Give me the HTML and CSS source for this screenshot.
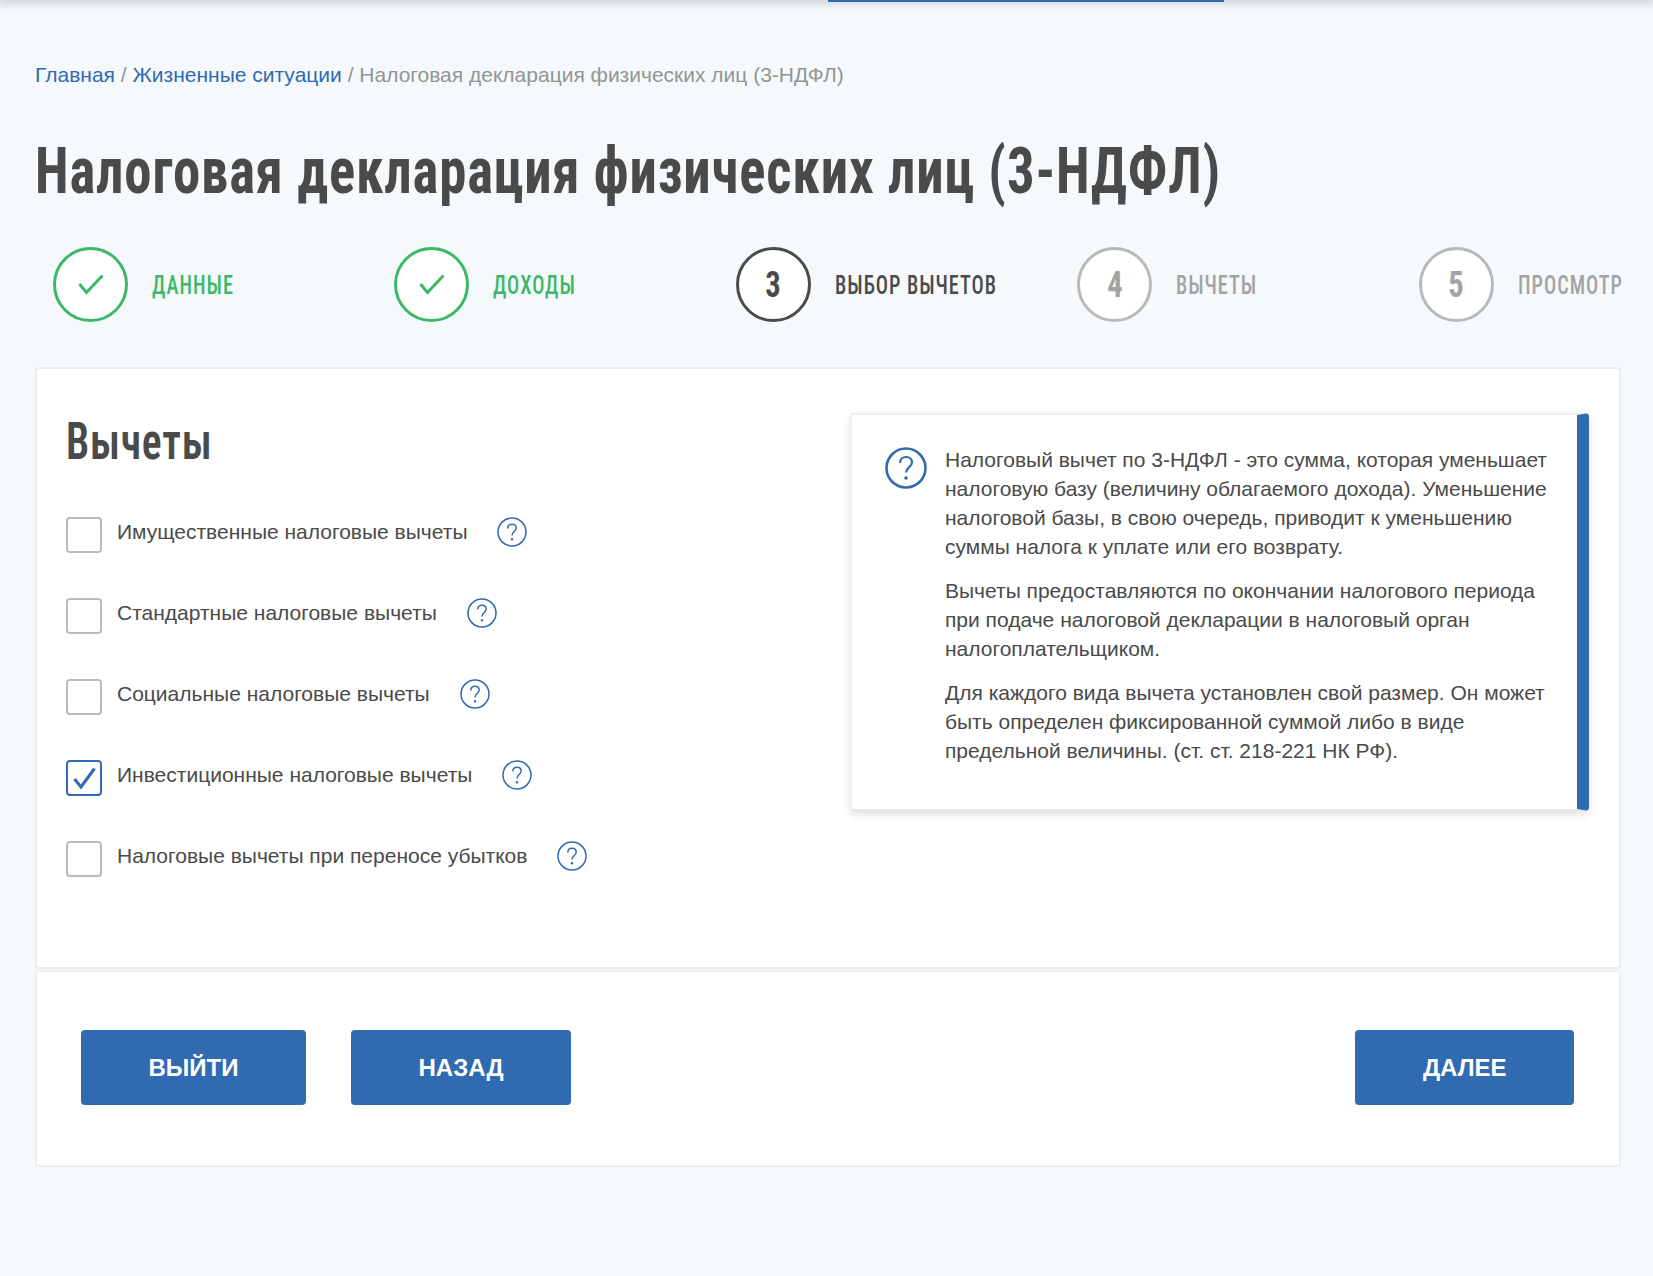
FILE: index.html
```html
<!DOCTYPE html>
<html lang="ru">
<head>
<meta charset="utf-8">
<title>Налоговая декларация физических лиц (3-НДФЛ)</title>
<link rel="stylesheet" href="styles.css">
</head>
<body>
<div class="topbar"><div class="topbar-active"></div></div>
<main class="page">
  <nav class="crumbs"><a href="#">Главная</a> / <a href="#">Жизненные ситуации</a> / Налоговая декларация физических лиц (3-НДФЛ)</nav>
  <h1 class="title">Налоговая декларация физических лиц (3-НДФЛ)</h1>
  <ol class="steps">
    <li class="step done"><span class="step-circle"><svg width="30" height="30" viewBox="0 0 30 30"><path d="M3.500 14 L10.500 22.500 L26.500 5.500" fill="none" stroke="currentColor" stroke-width="3"/></svg></span><span class="step-label">Данные</span></li>
    <li class="step done"><span class="step-circle"><svg width="30" height="30" viewBox="0 0 30 30"><path d="M3.500 14 L10.500 22.500 L26.500 5.500" fill="none" stroke="currentColor" stroke-width="3"/></svg></span><span class="step-label">Доходы</span></li>
    <li class="step current"><span class="step-circle"><span class="step-num">3</span></span><span class="step-label">Выбор вычетов</span></li>
    <li class="step"><span class="step-circle"><span class="step-num">4</span></span><span class="step-label">Вычеты</span></li>
    <li class="step"><span class="step-circle"><span class="step-num">5</span></span><span class="step-label">Просмотр</span></li>
  </ol>
  <section class="card card-main">
    <div class="col-left">
      <h2 class="subtitle">Вычеты</h2>
      <ul class="options">
        <li class="option"><span class="box"></span><span class="option-text">Имущественные налоговые вычеты</span><svg class="q" viewBox="0 0 30 30"><circle cx="15" cy="15" r="14" fill="none" stroke="#306ab1" stroke-width="1.5"/><path d="M10.8 11.4c0-2.6 1.9-4.2 4.3-4.2s4.1 1.6 4.1 3.8c0 3.4-4.2 3.6-4.2 7.4" fill="none" stroke="#306ab1" stroke-width="1.5"/><circle cx="15" cy="22.3" r="1.2" fill="#306ab1"/></svg></li>
        <li class="option"><span class="box"></span><span class="option-text">Стандартные налоговые вычеты</span><svg class="q" viewBox="0 0 30 30"><circle cx="15" cy="15" r="14" fill="none" stroke="#306ab1" stroke-width="1.5"/><path d="M10.8 11.4c0-2.6 1.9-4.2 4.3-4.2s4.1 1.6 4.1 3.8c0 3.4-4.2 3.6-4.2 7.4" fill="none" stroke="#306ab1" stroke-width="1.5"/><circle cx="15" cy="22.3" r="1.2" fill="#306ab1"/></svg></li>
        <li class="option"><span class="box"></span><span class="option-text">Социальные налоговые вычеты</span><svg class="q" viewBox="0 0 30 30"><circle cx="15" cy="15" r="14" fill="none" stroke="#306ab1" stroke-width="1.5"/><path d="M10.8 11.4c0-2.6 1.9-4.2 4.3-4.2s4.1 1.6 4.1 3.8c0 3.4-4.2 3.6-4.2 7.4" fill="none" stroke="#306ab1" stroke-width="1.5"/><circle cx="15" cy="22.3" r="1.2" fill="#306ab1"/></svg></li>
        <li class="option"><span class="box checked"><svg width="26" height="24" viewBox="0 0 26 24"><path d="M3.500 13 L10 21 L23.500 2.500" fill="none" stroke="#306ab1" stroke-width="3"/></svg></span><span class="option-text">Инвестиционные налоговые вычеты</span><svg class="q" viewBox="0 0 30 30"><circle cx="15" cy="15" r="14" fill="none" stroke="#306ab1" stroke-width="1.5"/><path d="M10.8 11.4c0-2.6 1.9-4.2 4.3-4.2s4.1 1.6 4.1 3.8c0 3.4-4.2 3.6-4.2 7.4" fill="none" stroke="#306ab1" stroke-width="1.5"/><circle cx="15" cy="22.3" r="1.2" fill="#306ab1"/></svg></li>
        <li class="option"><span class="box"></span><span class="option-text">Налоговые вычеты при переносе убытков</span><svg class="q" viewBox="0 0 30 30"><circle cx="15" cy="15" r="14" fill="none" stroke="#306ab1" stroke-width="1.5"/><path d="M10.8 11.4c0-2.6 1.9-4.2 4.3-4.2s4.1 1.6 4.1 3.8c0 3.4-4.2 3.6-4.2 7.4" fill="none" stroke="#306ab1" stroke-width="1.5"/><circle cx="15" cy="22.3" r="1.2" fill="#306ab1"/></svg></li>
      </ul>
    </div>
    <aside class="info">
      <svg class="info-icon" viewBox="0 0 42 42"><circle cx="21" cy="21" r="19.5" fill="none" stroke="#306ab1" stroke-width="2.6"/><path d="M15 16c0-3.6 2.700-6 6.200-6 3.400 0 5.800 2.200 5.800 5.300 0 4.700-5.900 5-5.900 10.300" fill="none" stroke="#306ab1" stroke-width="2.200"/><circle cx="21" cy="31" r="1.800" fill="#306ab1"/></svg>
      <div class="info-text">
        <p>Налоговый вычет по 3-НДФЛ - это сумма, которая уменьшает налоговую базу (величину облагаемого дохода). Уменьшение налоговой базы, в свою очередь, приводит к уменьшению суммы налога к уплате или его возврату.</p>
        <p>Вычеты предоставляются по окончании налогового периода при подаче налоговой декларации в налоговый орган налогоплательщиком.</p>
        <p>Для каждого вида вычета установлен свой размер. Он может быть определен фиксированной суммой либо в виде предельной величины. (ст. ст. 218-221 НК РФ).</p>
      </div>
    </aside>
  </section>
  <section class="card card-actions">
    <button class="btn">Выйти</button>
    <button class="btn">Назад</button>
    <button class="btn btn-next">Далее</button>
  </section>
</main>
</body>
</html>
```
FILE: styles.css
```css
* { box-sizing: border-box; }
html, body { margin: 0; padding: 0; }
body {
  background: #f5f9fc;
  color: #4a4a4a;
  font-family: "Liberation Sans", Arial, sans-serif;
  font-size: 21px;
  height: 1276px;
  overflow: hidden;
}
.topbar {
  height: 0;
  box-shadow: 0 0 9px 3px rgba(70, 80, 90, 0.3);
  display: flex;
  padding-left: 828px;
}
.topbar-active { width: 396px; height: 2px; background: #306ab1; flex: none; }
.page { padding: 0 32px 0 35px; }
.crumbs { padding-top: 60px; line-height: 30px; color: #949494; }
.crumbs a { color: #306ab1; text-decoration: none; }
.title, .subtitle, .step-label, .step-num {
  font-family: Roboto, "Liberation Sans", sans-serif;
  font-stretch: 75%;
}
.title {
  margin: 45px 0 0;
  font-size: 64px;
  line-height: 74px;
  font-weight: 700;
  letter-spacing: 1px;
  white-space: nowrap;
  transform: scaleX(0.855);
  transform-origin: left center;
}
.steps {
  list-style: none;
  margin: 38px 0 0;
  padding: 0 0 0 18px;
  display: grid;
  grid-template-columns: repeat(4, 341.4px) auto;
}
.step { display: flex; align-items: center; gap: 24px; color: #a3a3a3; }
.step-circle {
  width: 75px; height: 75px;
  border-radius: 50%;
  border: 3px solid #b9b9b9;
  background: #fff;
  display: flex; align-items: center; justify-content: center;
  flex: none;
}
.step-num { font-size: 36px; font-weight: 700; display: block; transform: scaleX(0.85); }
.step-label {
  font-size: 26px;
  font-weight: 500;
  text-transform: uppercase;
  letter-spacing: 1.3px;
  white-space: nowrap;
  width: 100px;
  transform: scaleX(0.78);
  transform-origin: left center;
}
.step.done { color: #3cb868; }
.step.done .step-circle { border-color: #3cb868; }
.step.current { color: #4a4a4a; }
.step.current .step-circle { border-color: #4a4a4a; }
.card {
  background: #fff;
  border: 2px solid #ececec;
  border-radius: 4px;
}
.card-main {
  margin-top: 45px;
  height: 602px;
  padding: 44px 30px 0 29px;
  display: flex;
  justify-content: space-between;
  align-items: flex-start;
}
.subtitle {
  margin: 0;
  font-size: 52px;
  line-height: 58px;
  font-weight: 600;
  letter-spacing: 1px;
  transform: scaleX(0.8);
  transform-origin: left center;
}
.options { list-style: none; margin: 46px 0 0; padding: 0; }
.option { display: flex; align-items: flex-start; height: 81px; }
.box {
  width: 36px; height: 36px;
  border: 2px solid #bbb;
  border-radius: 4px;
  margin-right: 15px;
  flex: none;
  display: flex; align-items: center; justify-content: center;
}
.box.checked { border-color: #306ab1; }
.option-text { line-height: 30px; white-space: nowrap; }
.q { width: 30px; height: 30px; margin-left: 30px; flex: none; }
.info {
  width: 739px;
  height: 398px;
  background: #fff;
  border-top: 2px solid #efefef;
  border-left: 2px solid #efefef;
  border-bottom: 2px solid #e8e8e8;
  border-right: 12px solid #306ab1;
  border-radius: 4px;
  box-shadow: 0 4px 8px rgba(0, 0, 0, 0.12);
  padding: 30px 29px 0 33px;
  display: flex;
  gap: 18px;
}
.info-icon { width: 42px; height: 42px; margin-top: 2px; flex: none; }
.info-text p { margin: 0 0 15px; line-height: 29px; }
.card-actions {
  margin-top: 1px;
  height: 197px;
  padding: 58px 45px 0 44px;
  display: flex;
  align-items: flex-start;
  gap: 45px;
}
.btn {
  height: 75px;
  padding: 0 67.5px;
  background: #306ab1;
  color: #fff;
  border: 0;
  border-radius: 4px;
  font-family: "Liberation Sans", Arial, sans-serif;
  font-size: 24px;
  font-weight: 700;
  text-transform: uppercase;
}
.btn-next { margin-left: auto; }
```
